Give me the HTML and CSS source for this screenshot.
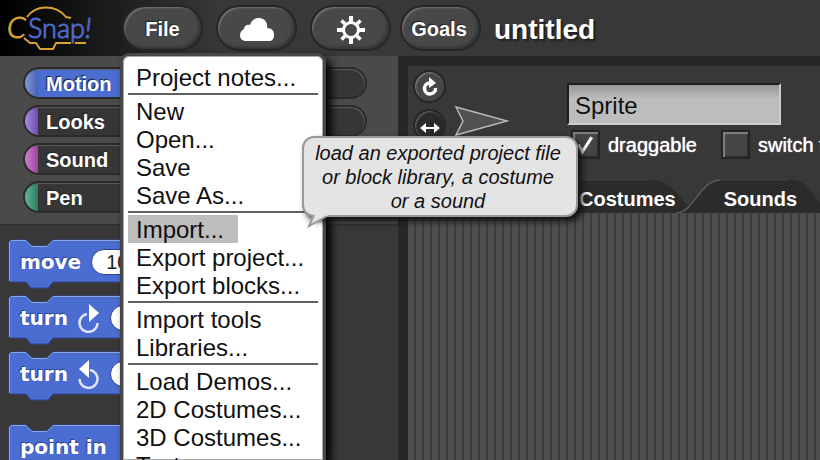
FILE: index.html
```html
<!DOCTYPE html>
<html lang="en">
<head>
<meta charset="utf-8">
<title>untitled</title>
<link rel="stylesheet" href="styles.css">
</head>
<body>
<svg class="defs" aria-hidden="true">
  <defs>
    <symbol id="block-shape" viewBox="0 0 200 50">
      <path d="M3 1H18L24 7H39L45 1H199V43H45L40 49H23L18 43H3L1 41V3Z" fill="#4b6dd2" stroke="#2f4796" stroke-width="1"/>
      <path d="M1.500 42V3L3 1.500H18L24 7.500H39L45 1.500H199" fill="none" stroke="#8ea3e2" stroke-width="1"/>
    </symbol>
  </defs>
</svg>
<header class="toolbar">
  <svg class="logo" viewBox="0 0 96 56" role="img" aria-label="Snap logo">
    <g fill="none" stroke="#d9a136" stroke-width="2" stroke-linejoin="round">
      <path d="M27 17C32 10 39 7.500 46 7.500C55 7.500 62 12 66 17L71 18"/>
      <path d="M24 38L30 43H36L40 49H53L56 43H71M75 43H86"/>
    </g>
    <text class="logo-c" x="7" y="38">C</text>
    <text class="logo-name" x="28" y="38">Snap<tspan class="logo-bang">!</tspan></text>
  </svg>
  <nav class="actions">
    <button class="pill">File</button>
    <button class="pill" aria-label="Cloud">
      <svg width="36" height="24" viewBox="0 0 36 24"><path d="M7 23C3 23 1 20.500 1 17C1 14 3 12 5 11C5 8 8 6 11 7C12 3 15 0 20 0C26 0 29 5 28 10C33 10 35 13 35 17C35 21 33 23 30 23Z" fill="#fff"/></svg>
    </button>
    <button class="pill" aria-label="Settings">
      <svg width="30" height="30" viewBox="-15 -15 30 30"><circle r="7.500" fill="none" stroke="#fff" stroke-width="3"/><g stroke="#fff" stroke-width="4"><path d="M0-8V-14M0 8V14M8 0H14M-8 0H-14"/><path stroke-width="3.500" d="M6 6L9.500 9.500M-6 6L-9.500 9.500M6-6L9.500-9.500M-6-6L-9.500-9.500"/></g></svg>
    </button>
    <button class="pill pill-goals">Goals</button>
  </nav>
  <h1 class="project-name">untitled</h1>
</header>

<main class="workspace">
  <section class="palette">
    <div class="categories">
      <button class="category motion selected">Motion</button><span class="category"></span>
      <button class="category looks">Looks</button><span class="category"></span>
      <button class="category sound">Sound</button><span class="category"></span>
      <button class="category pen">Pen</button><span class="category"></span>
    </div>
    <div class="blocks">
      <div class="block">
        <svg class="block-bg"><use href="#block-shape"/></svg>
        <span>move</span><span class="slot">10</span>
      </div>
      <div class="block">
        <svg class="block-bg"><use href="#block-shape"/></svg>
        <span>turn</span>
        <svg width="22" height="30" viewBox="0 0 22 30"><path d="M9 11A9 9 0 1 0 19.500 20" fill="none" stroke="#dfe6fa" stroke-width="2.500"/><path d="M11 1L21 10L11 19Z" fill="#fff"/></svg>
        <span class="slot"></span>
      </div>
      <div class="block">
        <svg class="block-bg"><use href="#block-shape"/></svg>
        <span>turn</span>
        <svg width="22" height="30" viewBox="0 0 22 30"><path d="M12 11A9 9 0 1 1 1.500 20" fill="none" stroke="#dfe6fa" stroke-width="2.500"/><path d="M11 1L1 10L11 19Z" fill="#fff"/></svg>
        <span class="slot"></span>
      </div>
      <div class="block block-apart">
        <svg class="block-bg"><use href="#block-shape"/></svg>
        <span>point in</span>
      </div>
    </div>
  </section>

  <section class="sprite-area">
    <div class="sprite-bar">
      <div class="rotation">
        <button class="round" aria-label="Can rotate"><svg width="18" height="20" viewBox="0 0 18 20"><path d="M8 6A5.500 5.500 0 1 0 14.500 11" fill="none" stroke="#fff" stroke-width="3.500"/><path d="M8 0L15 6L8 11Z" fill="#fff"/></svg></button>
        <button class="round pressed" aria-label="Only face left or right"><svg width="20" height="10" viewBox="0 0 20 10"><path d="M0 5L6 0V4H14V0L20 5L14 10V6H6V10Z" fill="#fff"/></svg></button>
      </div>
      <svg class="thumbnail" width="56" height="32" viewBox="0 0 56 32"><path d="M2 2L53 16L2 30L9 16Z" fill="#505050" stroke="#b8b8b8" stroke-width="1.500"/></svg>
      <div class="fields">
        <input class="sprite-name" type="text" value="Sprite" aria-label="Sprite name">
        <div class="options">
          <label class="option">
            <span class="tick"><input type="checkbox" checked><svg viewBox="0 0 28 28"><path d="M7 14L11 21L20 7" fill="none" stroke="#fff" stroke-width="3"/></svg></span>
            draggable
          </label>
          <label class="option">
            <span class="tick"><input type="checkbox"></span>
            switch f
          </label>
        </div>
      </div>
    </div>
    <div class="tabs">
      <button class="tab">
        <svg class="tab-bg" viewBox="0 0 190 34"><path d="M0 34V1H104C128 1 134 34 154 34Z" fill="#2b2b2b"/><path d="M0 1H100" stroke="#444"/></svg>
        Costumes
      </button>
      <button class="tab tab-sounds">
        <svg class="tab-bg" viewBox="0 0 190 34"><path d="M0 34C18 34 24 1 44 1H116C136 1 142 34 162 34Z" fill="#2b2b2b"/><path d="M0 34C18 34 24 1 44 1" fill="none" stroke="#5c5c5c" stroke-width="1.500"/><path d="M44 1H112" stroke="#444"/></svg>
        Sounds
      </button>
    </div>
    <div class="scripts"></div>
  </section>
</main>

<div class="menu" role="menu">
  <button class="item" role="menuitem">Project notes...</button>
  <hr>
  <button class="item" role="menuitem">New</button>
  <button class="item" role="menuitem">Open...</button>
  <button class="item" role="menuitem">Save</button>
  <button class="item" role="menuitem">Save As...</button>
  <hr>
  <button class="item active" role="menuitem">Import...</button>
  <button class="item" role="menuitem">Export project...</button>
  <button class="item" role="menuitem">Export blocks...</button>
  <hr>
  <button class="item" role="menuitem">Import tools</button>
  <button class="item" role="menuitem">Libraries...</button>
  <hr>
  <button class="item" role="menuitem">Load Demos...</button>
  <button class="item" role="menuitem">2D Costumes...</button>
  <button class="item" role="menuitem">3D Costumes...</button>
  <button class="item" role="menuitem">Textures...</button>
</div>

<div class="tooltip" role="tooltip">load an exported project file<br>or block library, a costume<br>or a sound
  <svg class="tail" width="24" height="16" viewBox="0 0 24 16"><path d="M6 0V3L1 14L21 4V0Z" fill="#e4e4e4"/><path d="M7 3L2 14L20 4" fill="none" stroke="#999" stroke-width="2"/></svg>
</div>
</body>
</html>
```

FILE: styles.css
```css
* { box-sizing: border-box; }
body {
  margin: 0;
  height: 100vh;
  display: flex;
  flex-direction: column;
  overflow: hidden;
  background: #272727;
  color: #fff;
  font-family: "Liberation Sans", Arial, sans-serif;
  font-size: 20px;
}
button { border: 0; padding: 0; margin: 0; color: inherit; font: inherit; background: none; }
.defs { position: absolute; width: 0; height: 0; }

/* Toolbar */
.toolbar {
  flex: none;
  display: flex;
  align-items: center;
  height: 56px;
  background: linear-gradient(to right, #000, #383838 220px);
}
.logo { width: 96px; height: 56px; margin-right: 26px; }
.logo-c { font: italic 300 30px Lato, sans-serif; fill: #d9a136; stroke: #d9a136; }
.logo-name { font: 300 27px Lato, sans-serif; fill: #4c69c8; stroke: #4c69c8; }
.logo-bang { font-style: italic; }
.actions { display: flex; gap: 13px; }
.pill {
  display: flex;
  align-items: center;
  justify-content: center;
  width: 81px;
  height: 46px;
  padding-top: 3px;
  border: 2px solid #262626;
  border-radius: 23px;
  background: #484848;
  box-shadow: inset 2px 2px 2px -1px #787878, inset -2px -2px 3px #333;
  font-weight: 700;
  text-shadow: -1px -1px 1px #222;
}
.pill-goals { margin-left: -4px; padding-right: 3px; }
.project-name {
  margin: 0 0 0 13px;
  padding-top: 4px;
  font-size: 28px;
  line-height: 32px;
  text-shadow: 2px 2px 2px #1c1c1c;
}

/* Palette */
.workspace { flex: 1; min-height: 0; display: grid; grid-template-columns: 398px 1fr; gap: 10px; }
.palette { display: flex; flex-direction: column; min-height: 0; background: #383838; }
.categories {
  display: grid;
  grid-template-columns: 1fr 1fr;
  gap: 6px 8px;
  padding: 11px 31px 11px 23px;
  background: #4a4a4a;
  border-bottom: 1px solid #303030;
}
.category {
  height: 32px;
  padding: 2px 0 0 21px;
  border: 2px solid #2b2b2b;
  border-radius: 16px;
  background: linear-gradient(to right, var(--dim, #363636), var(--hue, #363636) 13px, #363636 13px);
  box-shadow: inset -1px 1px 1px #5c5c5c;
  font-weight: 700;
  line-height: 26px;
  text-align: left;
  text-shadow: -1px -1px 1px #222;
}
.motion { --dim: #8297d8; --hue: #4862b0; }
.looks { --dim: #a78bde; --hue: #6c4bae; }
.sound { --dim: #cc7fd0; --hue: #9a45a0; }
.pen { --dim: #66b397; --hue: #2a7d60; }
.selected { background: linear-gradient(to right, #8297d8, #4862b0 13px, #4b6dd2 13px); }
.blocks { display: flex; flex-direction: column; gap: 12px; padding: 14px 0 0 8px; min-height: 0; overflow: hidden; }
.block {
  position: relative;
  flex: none;
  display: flex;
  align-items: center;
  gap: 10px;
  width: 200px;
  height: 44px;
  padding: 2px 0 0 12px;
  font: 700 20px "DejaVu Sans", Verdana, sans-serif;
  text-shadow: -1px -1px 1px #2c438c;
}
.block > * { position: relative; }
.block .block-bg { position: absolute; inset: 0; width: 200px; height: 50px; }
.block-apart { margin-top: 17px; }
.slot {
  min-width: 50px;
  height: 26px;
  padding: 0 14px;
  border: 1px solid #2c438c;
  border-radius: 13px;
  background: #fff;
  color: #222;
  font: 20px/24px "Liberation Sans", Arial, sans-serif;
  text-shadow: none;
}

/* Sprite bar */
.sprite-area { display: flex; flex-direction: column; min-width: 0; padding-top: 10px; overflow: hidden; }
.sprite-bar { display: flex; height: 113px; padding-left: 5px; background: #383838; }
.rotation { display: flex; flex-direction: column; gap: 6px; padding-top: 4px; }
.round {
  display: flex;
  align-items: center;
  justify-content: center;
  width: 33px;
  height: 33px;
  border: 2px solid #262626;
  border-radius: 50%;
  background: #464646;
  box-shadow: inset 1px 1px 2px #858585;
}
.round.pressed { padding-top: 4px; background: #2a2a2a; box-shadow: inset 1px 1px 2px #666; }
.thumbnail { flex: none; margin: 39px 0 0 8px; }
.fields { margin-left: 57px; padding-top: 17px; min-width: 0; }
.sprite-name {
  display: block;
  width: 214px;
  height: 42px;
  padding: 3px 6px 0;
  border: 2px solid;
  border-color: #1e1e1e #ccc #ccc #1e1e1e;
  border-radius: 0;
  background: linear-gradient(#979797, #bdbdbd 14px);
  color: #111;
  font: 24px "Liberation Sans", Arial, sans-serif;
}
.options { display: flex; gap: 24px; padding: 5px 0 0 4px; }
.option { display: flex; align-items: center; gap: 8px; white-space: nowrap; line-height: 28px; text-shadow: 0 0 1px #fff; }
.tick { position: relative; display: flex; flex: none; }
.tick input {
  appearance: none;
  width: 29px;
  height: 29px;
  margin: 0;
  border: 2px solid #242424;
  background: #454545;
  box-shadow: inset 2px 2px 1px #808080, inset -1px -1px 1px #303030;
}
.tick svg { position: absolute; inset: 0; }

/* Tabs */
.tabs { display: flex; height: 34px; padding-left: 141px; background: #383838; }
.tab {
  position: relative;
  isolation: isolate;
  padding: 5px 0 0 30px;
  font-weight: 700;
  line-height: 30px;
}
.tab-sounds { padding-left: 48px; }
.tab-bg { position: absolute; z-index: -1; top: 0; left: 0; width: 190px; height: 34px; }
.scripts { flex: 1; background: repeating-linear-gradient(to right, #4e4e4e 0 6px, #3c3c3c 6px 8px); }

/* Menu */
.menu {
  position: absolute;
  top: 53px;
  bottom: 0;
  left: 120px;
  width: 206px;
  padding: 7px 5px 0;
  border: 3px solid #484848;
  border-bottom: 0;
  border-radius: 9px 9px 0 0;
  background: #fff;
  box-shadow: inset 0 0 0 1px #aaa, 5px 5px 8px #000;
  overflow: hidden;
  color: #111;
  font-size: 24px;
}
.item { display: block; min-width: 110px; height: 28px; padding: 2px 0 0 8px; line-height: 26px; text-align: left; white-space: nowrap; }
.item.active { background: #bdbdbd; }
.menu hr { height: 2px; margin: 2px 0; border: 0; background: #606060; }

/* Tooltip */
.tooltip {
  position: absolute;
  top: 136px;
  left: 302px;
  width: 276px;
  padding: 3px 8px 2px 4px;
  border: 2px solid #999;
  border-radius: 12px;
  background: #e4e4e4;
  box-shadow: 4px 4px 6px #111;
  color: #111;
  font-style: italic;
  line-height: 24px;
  text-align: center;
}
.tail { position: absolute; top: 74px; left: 3px; }
```
